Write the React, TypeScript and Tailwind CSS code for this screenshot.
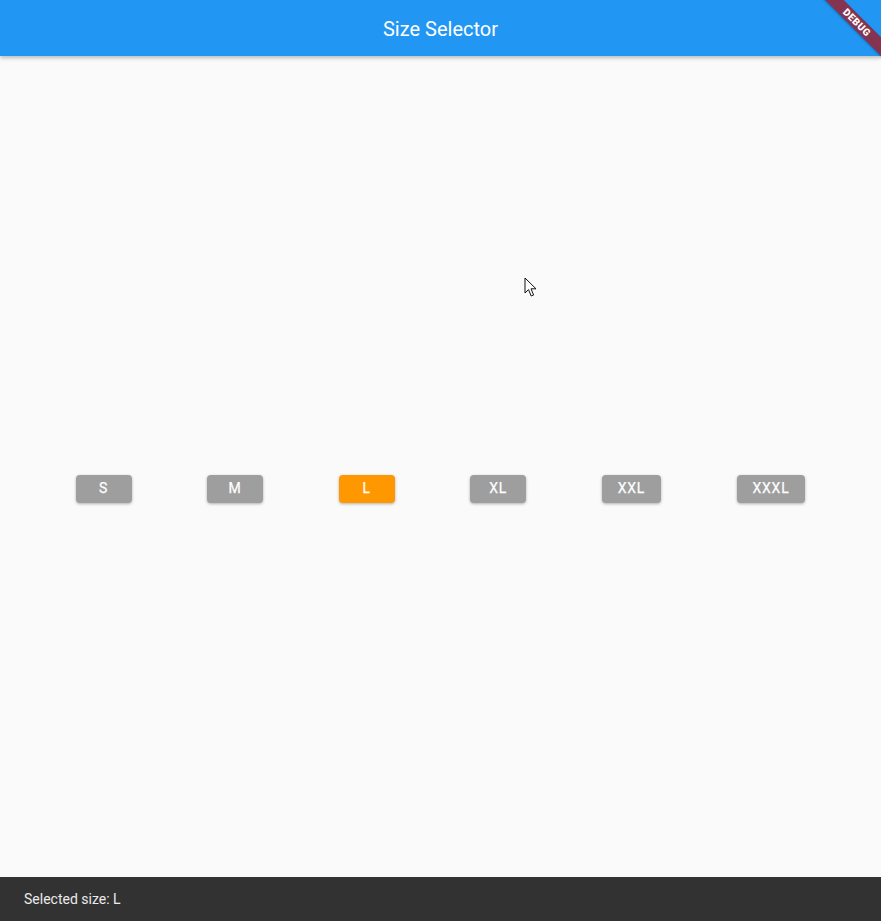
const sizes = ['S', 'M', 'L', 'XL', 'XXL', 'XXXL']
const selected = 'L'

function DebugBanner() {
  return (
    <div className="pointer-events-none absolute left-[797px] top-[16px] flex h-[13px] w-[120px] rotate-45 items-center justify-center bg-[#843450] shadow-[0_1px_2px_rgba(0,0,0,0.3)]">
      <span className="text-[10px] font-black leading-none tracking-[0.5px] text-white">DEBUG</span>
    </div>
  )
}

function Cursor() {
  return (
    <svg className="pointer-events-none absolute left-[524px] top-[277px]" width="14" height="21" viewBox="0 0 14 21">
      <path d="M1 1 L1 16 L4.5 12.6 L7.2 19 L9.6 18 L7 11.8 L12 11.8 Z" fill="#fff" stroke="#111" strokeWidth="1" strokeLinejoin="round" />
    </svg>
  )
}

export default function App() {
  return (
    <div className="relative flex h-[921px] w-full flex-col overflow-hidden bg-[#fafafa] font-['Roboto',sans-serif]">
      <header className="relative z-10 flex h-14 shrink-0 items-center justify-center bg-[#2196f3] pt-[2px] shadow-[0_2px_4px_rgba(0,0,0,0.25)]">
        <h1 className="text-[20px] font-normal text-white">Size Selector</h1>
      </header>

      <main className="flex flex-1 items-center justify-evenly">
        {sizes.map((s) => (
          <button
            key={s}
            className={
              'flex h-[28px] min-w-[56px] items-center justify-center rounded-[4px] px-4 text-[14px] font-normal tracking-[0.75px] text-white [-webkit-text-stroke:0.25px_white] shadow-[0_1px_3px_rgba(0,0,0,0.3)] ' +
              (s === selected ? 'bg-[#ff9800]' : 'bg-[#9e9e9e]')
            }
          >
            {s}
          </button>
        ))}
      </main>

      {/* snackbar */}
      <div className="absolute bottom-0 left-0 right-0 z-20 flex h-[44px] items-center bg-[#323232] px-6">
        <span className="text-[14px] text-white/90">Selected size: {selected}</span>
      </div>

      <Cursor />
      <div className="absolute inset-0 z-30 overflow-hidden pointer-events-none">
        <DebugBanner />
      </div>
    </div>
  )
}
